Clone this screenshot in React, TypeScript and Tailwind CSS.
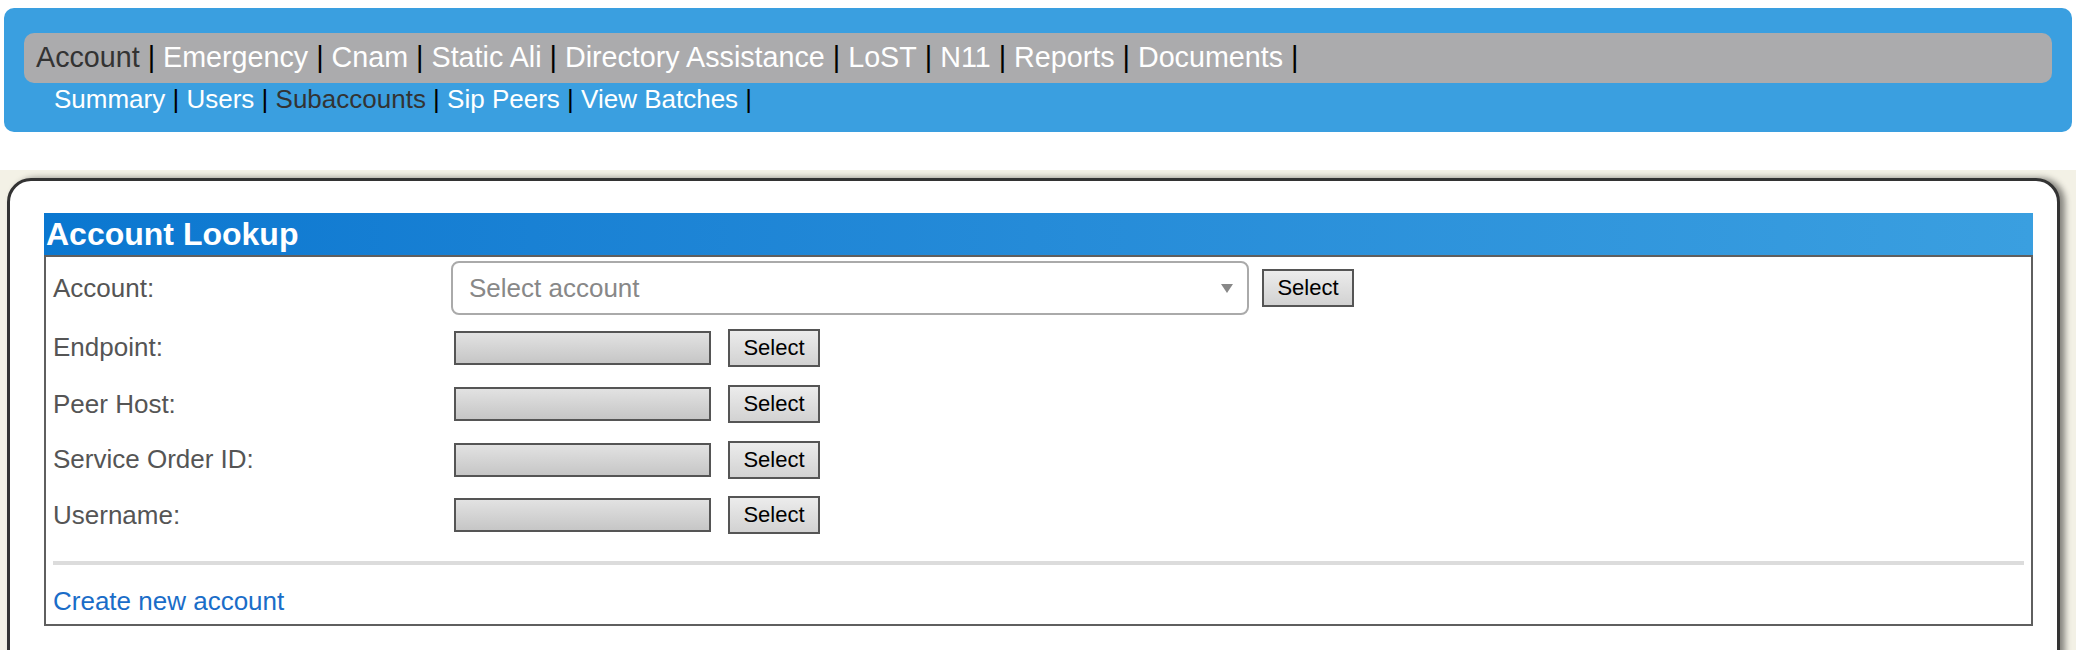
import React from 'react';

const MAIN_NAV = ['Account', 'Emergency', 'Cnam', 'Static Ali', 'Directory Assistance', 'LoST', 'N11', 'Reports', 'Documents'];
const SUB_NAV = ['Summary', 'Users', 'Subaccounts', 'Sip Peers', 'View Batches'];
const LOOKUPS = ['Endpoint:', 'Peer Host:', 'Service Order ID:', 'Username:'];
const ROW_HEIGHTS = ['h-[57px]', 'h-[56px]', 'h-[55px]', 'h-[56px]'];

function NavLine({ items, active, className }: { items: string[]; active: string; className: string }) {
  return (
    <div className={className}>
      {items.map((item) => (
        <React.Fragment key={item}>
          <a className={item === active ? 'text-[#333]' : 'text-white'}>{item}</a>
          <span className="text-black"> | </span>
        </React.Fragment>
      ))}
    </div>
  );
}

function SelectButton() {
  return (
    <button className="h-[38px] w-[92px] border-2 border-[#555] bg-gradient-to-b from-[#ececec] to-[#d2d2d2] text-[22px] leading-none text-black">
      Select
    </button>
  );
}

export default function App() {
  return (
    <div className="w-[2076px] h-[650px] overflow-hidden bg-white pt-[8px] font-['Liberation_Sans',Arial,sans-serif]">
      <div className="mx-[4px] h-[124px] rounded-[10px] bg-[#3a9fe0] pt-[25px]">
        <NavLine
          items={MAIN_NAV}
          active="Account"
          className="mx-[20px] flex h-[50px] items-center whitespace-pre rounded-[10px] bg-[#ababad] pl-[12px] text-[28.7px]"
        />
        <NavLine items={SUB_NAV} active="Subaccounts" className="mt-[1px] whitespace-pre pl-[50px] text-[26px] leading-[30px]" />
      </div>

      <div className="mt-[38px] bg-[#f3f1e6] pl-[7px] pr-[16px] pt-[8px]">
        <div className="rounded-t-[24px] border-[3px] border-[#333] bg-white pb-[60px] shadow-[5px_0_6px_rgba(0,0,0,0.45)]">
          <div className="ml-[34px] mr-[24px] mt-[32px]">
            <div className="h-[42px] bg-gradient-to-r from-[#0a77d0] to-[#3a9fe0] pl-[2px] text-[32px] font-bold leading-[42px] text-white">
              Account Lookup
            </div>
            <div className="border-2 border-[#5f5f5f] px-[7px] pb-[8px] text-[26px] text-[#555]">
              <div className="flex h-[62px] items-center">
                <span className="w-[398px]">Account:</span>
                <div className="flex h-[54px] w-[798px] items-center justify-between rounded-[8px] border-2 border-[#aaa] pl-[16px] pr-[14px] text-[#888]">
                  <span>Select account</span>
                  <span className="h-0 w-0 border-x-[6px] border-t-[9px] border-x-transparent border-t-[#888]" />
                </div>
                <div className="ml-[13px] flex">
                  <SelectButton />
                </div>
              </div>
              {LOOKUPS.map((label, i) => (
                <div key={label} className={`flex items-center ${ROW_HEIGHTS[i]}`}>
                  <span className="w-[398px]">{label}</span>
                  <div className="ml-[3px] h-[34px] w-[257px] border-2 border-[#555] bg-gradient-to-b from-[#e2e2e2] to-[#c6c6c6]" />
                  <div className="ml-[17px] flex">
                    <SelectButton />
                  </div>
                </div>
              ))}
              <div className="mt-[18px] h-[4px] bg-[#dcdcdc]" />
              <div className="mt-[21px] leading-[30px]">
                <a className="text-[#1a6dc8]">Create new account</a>
              </div>
            </div>
          </div>
        </div>
      </div>
    </div>
  );
}
